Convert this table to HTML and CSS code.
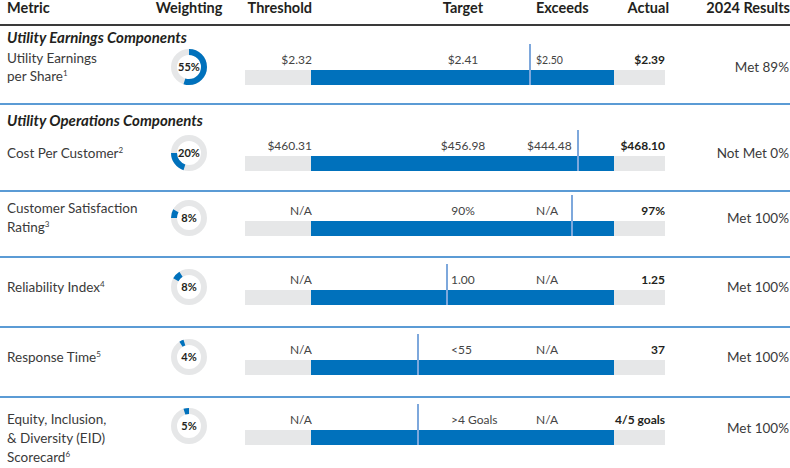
FILE: index.html
```html
<!DOCTYPE html>
<html lang="en">
<head>
<meta charset="utf-8">
<title>Utility Performance Metrics</title>
<link rel="stylesheet" href="styles.css">
</head>
<body>
<div class="table">
  <div class="grid head">
    <div class="metric-h">Metric</div>
    <div class="weight-h">Weighting</div>
    <div class="scale-cols">
      <span class="c-th">Threshold</span>
      <span class="c-tg">Target</span>
      <span class="c-ex">Exceeds</span>
      <span class="c-ac ac-head">Actual</span>
    </div>
    <div class="result result-h">2024 Results</div>
  </div>

  <section class="section sec1">
    <h3 class="sec-title">Utility Earnings Components</h3>
    <div class="grid row">
      <div class="metric">Utility Earnings<br>per Share<sup>1</sup></div>
      <div class="weight">
        <svg class="donut" viewBox="0 0 36 36"><circle class="ring" cx="18" cy="18" r="15"/><circle class="arc" cx="18" cy="18" r="15" pathLength="100" stroke-dasharray="55 200" stroke-dashoffset="0" transform="rotate(-90 18 18)"/></svg>
        <span class="pct">55%</span>
      </div>
      <div class="scale">
        <div class="scale-cols labels">
          <span class="c-th">$2.32</span>
          <span class="c-tg">$2.41</span>
          <span class="c-ex small">$2.50</span>
          <span class="c-ac">$2.39</span>
        </div>
        <div class="bar"><span class="seg-lo"></span><span class="seg-hit"></span></div>
        <span class="tick" style="left:284px"></span>
      </div>
      <div class="result">Met 89%</div>
    </div>
  </section>

  <section class="section sec2">
    <h3 class="sec-title">Utility Operations Components</h3>
    <div class="grid row">
      <div class="metric">Cost Per Customer<sup>2</sup></div>
      <div class="weight">
        <svg class="donut" viewBox="0 0 36 36"><circle class="ring" cx="18" cy="18" r="15"/><circle class="arc" cx="18" cy="18" r="15" pathLength="100" stroke-dasharray="20 200" stroke-dashoffset="-55" transform="rotate(-90 18 18)"/></svg>
        <span class="pct">20%</span>
      </div>
      <div class="scale">
        <div class="scale-cols labels">
          <span class="c-th">$460.31</span>
          <span class="c-tg">$456.98</span>
          <span class="c-ex ex-shift">$444.48</span>
          <span class="c-ac">$468.10</span>
        </div>
        <div class="bar"><span class="seg-lo"></span><span class="seg-hit"></span></div>
        <span class="tick" style="left:332px"></span>
      </div>
      <div class="result">Not Met 0%</div>
    </div>
  </section>

  <section class="section row3">
    <div class="grid row">
      <div class="metric">Customer Satisfaction<br>Rating<sup>3</sup></div>
      <div class="weight">
        <svg class="donut" viewBox="0 0 36 36"><circle class="ring" cx="18" cy="18" r="15"/><circle class="arc" cx="18" cy="18" r="15" pathLength="100" stroke-dasharray="8 200" stroke-dashoffset="-75" transform="rotate(-90 18 18)"/></svg>
        <span class="pct">8%</span>
      </div>
      <div class="scale">
        <div class="scale-cols labels">
          <span class="c-th">N/A</span>
          <span class="c-tg">90%</span>
          <span class="c-ex">N/A</span>
          <span class="c-ac">97%</span>
        </div>
        <div class="bar"><span class="seg-lo"></span><span class="seg-hit"></span></div>
        <span class="tick" style="left:326px"></span>
      </div>
      <div class="result">Met 100%</div>
    </div>
  </section>

  <section class="section row4">
    <div class="grid row">
      <div class="metric">Reliability Index<sup>4</sup></div>
      <div class="weight">
        <svg class="donut" viewBox="0 0 36 36"><circle class="ring" cx="18" cy="18" r="15"/><circle class="arc" cx="18" cy="18" r="15" pathLength="100" stroke-dasharray="8 200" stroke-dashoffset="-83" transform="rotate(-90 18 18)"/></svg>
        <span class="pct">8%</span>
      </div>
      <div class="scale">
        <div class="scale-cols labels">
          <span class="c-th">N/A</span>
          <span class="c-tg tg-left">1.00</span>
          <span class="c-ex">N/A</span>
          <span class="c-ac">1.25</span>
        </div>
        <div class="bar"><span class="seg-lo"></span><span class="seg-hit"></span></div>
        <span class="tick" style="left:201px"></span>
      </div>
      <div class="result">Met 100%</div>
    </div>
  </section>

  <section class="section row5">
    <div class="grid row">
      <div class="metric">Response Time<sup>5</sup></div>
      <div class="weight">
        <svg class="donut" viewBox="0 0 36 36"><circle class="ring" cx="18" cy="18" r="15"/><circle class="arc" cx="18" cy="18" r="15" pathLength="100" stroke-dasharray="4 200" stroke-dashoffset="-91" transform="rotate(-90 18 18)"/></svg>
        <span class="pct">4%</span>
      </div>
      <div class="scale">
        <div class="scale-cols labels">
          <span class="c-th">N/A</span>
          <span class="c-tg tg-left">&lt;55</span>
          <span class="c-ex">N/A</span>
          <span class="c-ac">37</span>
        </div>
        <div class="bar"><span class="seg-lo"></span><span class="seg-hit"></span></div>
        <span class="tick" style="left:172px"></span>
      </div>
      <div class="result">Met 100%</div>
    </div>
  </section>

  <section class="section row6">
    <div class="grid row">
      <div class="metric">Equity, Inclusion,<br>&amp; Diversity (EID)<br>Scorecard<sup>6</sup></div>
      <div class="weight">
        <svg class="donut" viewBox="0 0 36 36"><circle class="ring" cx="18" cy="18" r="15"/><circle class="arc" cx="18" cy="18" r="15" pathLength="100" stroke-dasharray="5 200" stroke-dashoffset="-95" transform="rotate(-90 18 18)"/></svg>
        <span class="pct">5%</span>
      </div>
      <div class="scale">
        <div class="scale-cols labels">
          <span class="c-th">N/A</span>
          <span class="c-tg tg-left">&gt;4 Goals</span>
          <span class="c-ex">N/A</span>
          <span class="c-ac">4/5 goals</span>
        </div>
        <div class="bar"><span class="seg-lo"></span><span class="seg-hit"></span></div>
        <span class="tick" style="left:172px"></span>
      </div>
      <div class="result result-mid">Met 100%</div>
    </div>
  </section>
</div>
</body>
</html>
```
FILE: styles.css
```css
* { box-sizing: border-box; margin: 0; padding: 0; }

html, body {
  width: 790px;
  height: 468px;
  overflow: hidden;
  background: #ffffff;
}

body {
  font-family: Lato, "Liberation Sans", sans-serif;
  color: #3a3a3a;
}

.table { width: 790px; }

.grid {
  display: grid;
  grid-template-columns: 150px 78px 17px 420px 125px;
}

/* header */
.head {
  height: 26px;
  border-bottom: 2px solid #3a3a3a;
  font-size: 14.5px;
  font-weight: 700;
  line-height: 16px;
  color: #231f20;
  align-items: start;
}
.metric-h { padding-left: 7px; }
.weight-h { grid-column: 2; text-align: center; }
.head .scale-cols { grid-column: 4; }
.ac-head { margin-right: -4px; }

/* shared scale columns */
.scale-cols {
  display: grid;
  grid-template-columns: 67px 118px 66px 40px 60px 69px;
  align-items: baseline;
}
.c-th { grid-column: 1; text-align: right; white-space: nowrap; }
.c-tg { grid-column: 3; text-align: center; white-space: nowrap; }
.c-ex { grid-column: 5; text-align: left; white-space: nowrap; }
.c-ac { grid-column: 6; text-align: right; white-space: nowrap; }
.tg-left { text-align: left; padding-left: 21px; }
.ex-shift { margin-left: -9px; }

/* sections & rows */
.section { border-bottom: 2px solid #5b9bd5; }
.row6 { border-bottom: none; }

.sec-title {
  font-size: 15px;
  font-style: italic;
  font-weight: 700;
  line-height: 18px;
  padding-left: 7px;
  color: #231f20;
}
.sec1 .sec-title { padding-top: 2px; }
.sec2 .sec-title { padding-top: 6px; }

.row { align-items: center; }
.sec1 .row { padding: 3px 0 18px; }
.sec2 .row { padding: 6px 0 19px; }
.row3 .row { padding: 7px 0 19px; }
.row4 .row,
.row5 .row { padding: 11px 0 21px; }
.row6 .row { padding: 12px 0 0; align-items: start; }

.metric {
  grid-column: 1;
  padding-left: 7px;
  font-size: 13.5px;
  line-height: 19px;
  color: #3a3a3a;
}
.sec1 .metric { line-height: 18px; }

sup {
  font-size: 8px;
  line-height: 0;
  vertical-align: 5px;
}

/* donut */
.weight {
  grid-column: 2;
  display: grid;
  place-items: center;
}
.weight > * { grid-area: 1 / 1; }
.row6 .weight { margin-top: -2px; }
.donut { width: 36px; height: 36px; display: block; }
.ring { fill: none; stroke: #e6e7e8; stroke-width: 6; }
.arc { fill: none; stroke: #0071bc; stroke-width: 6; }
.pct {
  font-size: 11px;
  font-weight: 700;
  color: #231f20;
  line-height: 12px;
}

/* scale */
.scale {
  grid-column: 4;
  position: relative;
}
.labels {
  height: 20px;
  line-height: 20px;
  font-size: 12px;
  color: #444;
}
.labels .c-ac { font-weight: 700; color: #231f20; }
.small { font-size: 10.5px; }

.bar {
  display: flex;
  height: 15px;
  background: #e6e7e8;
}
.seg-lo { width: 66px; }
.seg-hit { width: 303px; background: #0071bc; }

.tick {
  position: absolute;
  top: -6px;
  width: 2px;
  height: 41px;
  background: #7ea8dc;
}

/* result */
.result {
  grid-column: 5;
  text-align: right;
  padding-right: 1px;
  font-size: 13.5px;
  white-space: nowrap;
  color: #3a3a3a;
}
.result-h {
  padding-right: 0;
  font-size: 14.5px;
  color: #231f20;
}
.result-mid { align-self: start; margin-top: 10px; }
```
